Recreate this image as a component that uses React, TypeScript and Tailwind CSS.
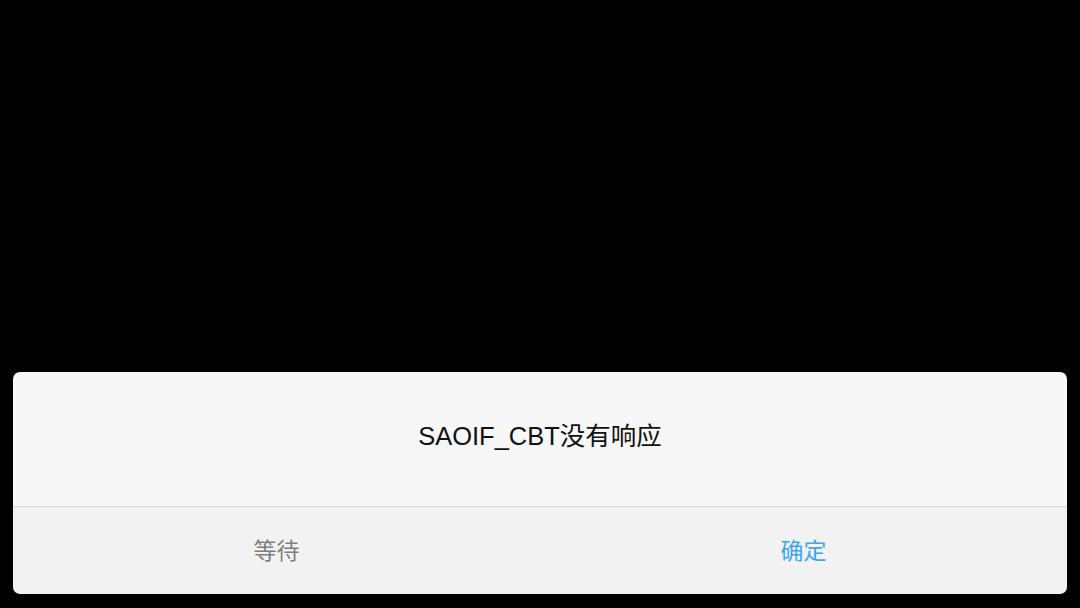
export default function App() {
  return (
    <div
      className="flex h-[608px] w-[1080px] flex-col justify-end bg-black px-[13px] pb-[14px]"
      style={{ fontFamily: '"Liberation Sans", "Noto Sans CJK SC", sans-serif' }}
    >
      <div className="flex h-[222px] flex-col overflow-hidden rounded-[7px]">
        {/* message */}
        <div className="flex h-[135px] items-center justify-center border-b border-[#d5d5d5] bg-[#f7f7f7] pb-[4px]">
          <span className="text-[25.5px] leading-none text-[#111111]">SAOIF_CBT没有响应</span>
        </div>

        {/* actions */}
        <div className="grid flex-1 grid-cols-2 bg-[#f2f2f2]">
          <button className="flex items-center justify-center pt-[2px] text-[23px] text-[#7f7f7f]">
            等待
          </button>
          <button className="flex items-center justify-center pt-[2px] text-[23px] text-[#3ea5f0]">
            确定
          </button>
        </div>
      </div>
    </div>
  );
}
